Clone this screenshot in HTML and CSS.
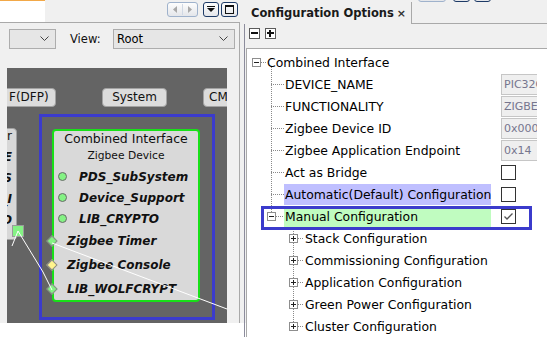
FILE: index.html
```html
<!DOCTYPE html>
<html lang="en">
<head>
    <meta charset="UTF-8">
    <title>Configuration Options</title>
    <link rel="stylesheet" href="styles.css">
</head>
<body>
<div class="app">
    <div class="left">
        <div class="left-head">
            <div class="doc-tab"></div>
            <div class="win-btns">
                <span class="wb wb-nav">
                    <svg width="29" height="13" viewBox="0 0 29 13"><path d="M9 3 L5 6.5 L9 10 Z" fill="#a8a8a8"/><line x1="14.5" y1="1" x2="14.5" y2="12" stroke="#d0d8e4"/><path d="M20 3 L24 6.5 L20 10 Z" fill="#a8a8a8"/></svg>
                </span>
                <span class="wb wb-menu">
                    <svg width="14" height="13" viewBox="0 0 14 13"><path d="M3 5 L11 5 L7 9 Z" fill="#111"/><line x1="3" y1="3.5" x2="11" y2="3.5" stroke="#111"/></svg>
                </span>
                <span class="wb wb-max">
                    <svg width="15" height="13" viewBox="0 0 15 13"><rect x="3.5" y="2.5" width="8" height="8" fill="none" stroke="#111"/><line x1="3.5" y1="3.5" x2="11.5" y2="3.5" stroke="#111"/></svg>
                </span>
            </div>
        </div>
        <div class="left-body">
            <div class="combo-row">
                <div class="combo combo-a">
                    <span></span>
                    <svg class="chev" width="9" height="6" viewBox="0 0 9 6"><polyline points="0.5,0.5 4.5,4.5 8.5,0.5" fill="none" stroke="#444"/></svg>
                </div>
                <span class="view-label">View:</span>
                <div class="combo combo-b">
                    <span>Root</span>
                    <svg class="chev" width="9" height="6" viewBox="0 0 9 6"><polyline points="0.5,0.5 4.5,4.5 8.5,0.5" fill="none" stroke="#444"/></svg>
                </div>
            </div>
            <div class="canvas">
                <div class="blk blk-dfp">F(DFP)</div>
                <div class="blk blk-sys">System</div>
                <div class="blk blk-cm">CMSIS</div>

                <div class="side-node">
                    <div class="side-title">Core Timer</div>
                    <div class="side-item">SYS_TIME</div>
                    <div class="side-item">RTOS_SDS</div>
                    <div class="side-item">HAL_I</div>
                    <div class="side-item">LIB_CRYPTO</div>
                </div>
                <div class="pin"></div>

                <div class="frame"></div>
                <div class="node">
                    <div class="node-title">Combined Interface</div>
                    <div class="node-sub">Zigbee Device</div>
                    <div class="dep"><i class="dot"></i>PDS_SubSystem</div>
                    <div class="dep"><i class="dot"></i>Device_Support</div>
                    <div class="dep"><i class="dot"></i>LIB_CRYPTO</div>
                    <div class="cap"><i class="gem"></i>Zigbee Timer</div>
                    <div class="cap"><i class="gem gem-y"></i>Zigbee Console</div>
                    <div class="cap"><i class="gem"></i>LIB_WOLFCRYPT</div>
                </div>

                <svg class="wires" width="220" height="255" viewBox="0 0 220 255">
                    <polyline points="45,175 220,241" fill="none" stroke="#fff"/>
                    <polyline points="11,163 36,204 45,222" fill="none" stroke="#fff"/>
                    <polyline points="11,163 5,178" fill="none" stroke="#fff"/>
                </svg>
            </div>
        </div>
    </div>

    <div class="gap"></div>

    <div class="right">
        <div class="tab-strip">
            <div class="tab">
                <span class="tab-title">Configuration Options</span>
                <span class="tab-close">&times;</span>
            </div>
            <div class="tab-fill">
                <div class="win-btns win-btns-top">
                    <span class="wb wb-nav"></span>
                    <span class="wb wb-menu"></span>
                    <span class="wb wb-max"></span>
                </div>
            </div>
        </div>
        <div class="rbody">
            <div class="toolbar">
                <span class="tool tool-minus"></span>
                <span class="tool tool-plus"></span>
            </div>
            <div class="tree">
                <div class="row root">
                    <span class="exp open"></span><span class="twig twig-root"></span>
                    <span class="lbl">Combined Interface</span>
                </div>
                <div class="kids kids1">
                    <div class="row">
                        <span class="twig"></span><span class="lbl">DEVICE_NAME</span>
                        <span class="val">PIC32CX1012MTG128</span>
                    </div>
                    <div class="row">
                        <span class="twig"></span><span class="lbl">FUNCTIONALITY</span>
                        <span class="val">ZIGBEE_DEVICE</span>
                    </div>
                    <div class="row">
                        <span class="twig"></span><span class="lbl">Zigbee Device ID</span>
                        <span class="val">0x0000</span>
                    </div>
                    <div class="row">
                        <span class="twig"></span><span class="lbl">Zigbee Application Endpoint</span>
                        <span class="val">0x14</span>
                    </div>
                    <div class="row">
                        <span class="twig"></span><span class="lbl">Act as Bridge</span>
                        <span class="chk"></span>
                    </div>
                    <div class="row">
                        <span class="twig"></span><span class="lbl lbl-blue">Automatic(Default) Configuration</span>
                        <span class="chk"></span>
                    </div>
                    <div class="row row-manual">
                        <span class="exp open"></span><span class="twig twig-short"></span>
                        <span class="lbl lbl-green">Manual Configuration</span>
                        <span class="chk">
                            <svg width="13" height="13" viewBox="0 0 13 13"><polyline points="2.5,6.5 5,9 10.5,3.5" fill="none" stroke="#555" stroke-width="1.3"/></svg>
                        </span>
                    </div>
                </div>
                <div class="kids kids2">
                    <div class="row"><span class="exp"></span><span class="twig twig-sub"></span><span class="lbl">Stack Configuration</span></div>
                    <div class="row"><span class="exp"></span><span class="twig twig-sub"></span><span class="lbl">Commissioning Configuration</span></div>
                    <div class="row"><span class="exp"></span><span class="twig twig-sub"></span><span class="lbl">Application Configuration</span></div>
                    <div class="row"><span class="exp"></span><span class="twig twig-sub"></span><span class="lbl">Green Power Configuration</span></div>
                    <div class="row"><span class="exp"></span><span class="twig twig-sub"></span><span class="lbl">Cluster Configuration</span></div>
                </div>
                <div class="focus-ring"></div>
            </div>
        </div>
    </div>
</div>
</body>
</html>
```

FILE: styles.css
```css
* {
    box-sizing: border-box;
}

body {
    margin: 0;
    width: 547px;
    height: 352px;
    overflow: hidden;
    background: #fff;
    font-family: "DejaVu Sans", sans-serif;
    font-size: 12px;
    color: #000;
}

.app {
    display: flex;
    height: 323px;
    background: #f0f0f0;
}

/* left editor panel */

.left {
    width: 240px;
    flex: none;
}

.left-head {
    height: 22px;
    display: flex;
    justify-content: space-between;
}

.doc-tab {
    width: 45px;
    height: 22px;
    background: #fff;
    border-top: 1px solid #f2a848;
}

.win-btns {
    display: flex;
    padding: 2px 2px 0 0;
}

.wb {
    height: 15px;
    border: 1px solid #1d3a66;
    border-radius: 3px;
    background: linear-gradient(#fdfdfd, #e4e6ea);
    display: flex;
    align-items: center;
    justify-content: center;
}

.wb-nav {
    width: 31px;
    border-color: #9fb2cc;
}

.wb-menu {
    width: 16px;
    margin-left: 5px;
}

.wb-max {
    width: 17px;
    margin-left: 2px;
}

.left-body {
    height: 301px;
    border-top: 1px solid #a9a9a9;
    border-right: 1px solid #a9a9a9;
    padding-top: 6px;
}

.combo-row {
    display: flex;
    align-items: center;
    height: 20px;
    font-size: 11.5px;
}

.combo {
    height: 20px;
    background: #e6e6e6;
    border: 1px solid #adadad;
    display: flex;
    align-items: center;
    justify-content: space-between;
    padding: 0 6px 0 3px;
}

.combo-a {
    width: 47px;
    margin-left: 9px;
}

.view-label {
    width: 43px;
    margin-left: 14px;
    color: #111;
}

.combo-b {
    width: 122px;
}

.canvas {
    position: relative;
    overflow: hidden;
    width: 220px;
    height: 255px;
    margin: 19px 0 0 7px;
    background: #646464;
}

.blk {
    position: absolute;
    top: 20px;
    height: 19px;
    line-height: 17px;
    background: #dcdcdc;
    border: 1px solid #a2a2a2;
    border-radius: 4px;
    font-size: 12px;
    color: #111;
    white-space: nowrap;
}

.blk-dfp {
    left: -8px;
    width: 57px;
    padding-left: 9px;
}

.blk-sys {
    left: 95px;
    width: 65px;
    text-align: center;
}

.blk-cm {
    left: 196px;
    width: 60px;
    padding-left: 5px;
}

.side-node {
    position: absolute;
    left: -90px;
    top: 60px;
    width: 100px;
    height: 112px;
    background: #d8d8d8;
    border: 1px solid #a2a2a2;
    border-radius: 4px;
    padding-right: 4px;
    text-align: right;
    color: #111;
    white-space: nowrap;
}

.side-title {
    line-height: 14px;
    font-size: 12px;
    margin-bottom: 4px;
}

.side-item {
    line-height: 21px;
    font-weight: bold;
    font-style: italic;
}

.pin {
    position: absolute;
    left: 5px;
    top: 157px;
    width: 12px;
    height: 12px;
    background: #84f284;
    border: 1px solid #9a9a9a;
}

.frame {
    position: absolute;
    left: 32px;
    top: 46px;
    width: 176px;
    height: 206px;
    border: 3px solid #3b3bcc;
}

.node {
    position: absolute;
    left: 45px;
    top: 61px;
    width: 148px;
    height: 173px;
    background: #d9d9d9;
    border: 2px solid #18e018;
    border-radius: 4px;
    color: #111;
}

.node-title {
    line-height: 16px;
    font-size: 12.5px;
    text-align: center;
}

.node-sub {
    margin-top: 2px;
    line-height: 14px;
    font-size: 10.7px;
    text-align: center;
    margin-bottom: 3px;
}

.dep,
.cap {
    display: flex;
    align-items: center;
    height: 21px;
    font-size: 12px;
    font-weight: bold;
    font-style: italic;
    white-space: nowrap;
}

.cap {
    height: 24px;
}

.dot {
    width: 9px;
    height: 9px;
    margin: 0 12px 0 4px;
    border-radius: 50%;
    background: #84f284;
    border: 1px solid #6a6a6a;
}

.gem {
    width: 8px;
    height: 8px;
    margin: 0 11px 0 -6px;
    transform: rotate(45deg);
    background: #84f284;
    border: 1px solid #8a8a8a;
}

.gem-y {
    background: #fff48c;
}

.wires {
    position: absolute;
    left: 0;
    top: 0;
}

.gap {
    width: 4px;
    flex: none;
}

/* right configuration panel */

.right {
    flex: 1;
    display: flex;
    flex-direction: column;
    min-width: 0;
}

.tab-strip {
    height: 24px;
    display: flex;
    flex: none;
}

.tab {
    width: 168px;
    height: 22px;
    margin-top: 2px;
    padding: 0 5px 0 7px;
    display: flex;
    align-items: center;
    justify-content: space-between;
    border-right: 1px solid #a9a9a9;
}

.tab-title {
    font-weight: bold;
    font-size: 11.5px;
    color: #1a1a1a;
}

.tab-close {
    font-size: 11px;
    font-weight: bold;
    color: #333;
}

.tab-fill {
    flex: 1;
    border-bottom: 1px solid #a9a9a9;
    overflow: hidden;
}

.win-btns-top {
    margin: -13px 0 0 6px;
    padding: 0;
}

.win-btns-top .wb-nav {
    width: 28px;
}

.win-btns-top .wb-menu {
    margin-left: 7px;
    width: 17px;
}

.win-btns-top .wb-max {
    margin-left: 4px;
}

.rbody {
    flex: 1;
    display: flex;
    flex-direction: column;
    border-left: 1px solid #8c8c9c;
}

.toolbar {
    height: 24px;
    flex: none;
    display: flex;
    gap: 5px;
    padding: 4px 0 0 4px;
}

.tool {
    position: relative;
    width: 11px;
    height: 11px;
    border: 1px solid #5a5a5a;
    background: #fff;
}

.tool::before,
.tool-plus::after {
    content: "";
    position: absolute;
    background: #111;
}

.tool::before {
    left: 1px;
    top: 3px;
    width: 7px;
    height: 2px;
}

.tool-plus::after {
    left: 3px;
    top: 1px;
    width: 2px;
    height: 7px;
}

.tree {
    position: relative;
    flex: 1;
    margin-left: 1px;
    padding-top: 2px;
    background: #fff;
    border-top: 1px solid #a9a9a9;
    border-left: 1px solid #a9a9a9;
    font-size: 12.4px;
    white-space: nowrap;
}

.row {
    display: flex;
    align-items: center;
    height: 22px;
}

.root {
    padding-left: 5px;
}

.kids {
    position: relative;
}

.kids::before {
    content: "";
    position: absolute;
    width: 1px;
    background: repeating-linear-gradient(to bottom, #8a8a8a 0 1px, transparent 1px 2px);
}

.kids1::before {
    left: 24px;
    top: -6px;
    height: calc(100% - 5px);
}

.kids2::before {
    left: 46px;
    top: 0;
    height: calc(100% - 11px);
}

.kids1 .row {
    padding-left: 24px;
}

.kids1 .row-manual {
    padding-left: 20px;
}

.kids2 .row {
    padding-left: 42px;
}

.twig {
    width: 13px;
    height: 1px;
    flex: none;
    background: repeating-linear-gradient(to right, #8a8a8a 0 1px, transparent 1px 2px);
}

.twig-root {
    width: 5px;
}

.twig-short {
    width: 8px;
}

.twig-sub {
    width: 6px;
}

.exp {
    position: relative;
    z-index: 1;
    width: 9px;
    height: 9px;
    flex: none;
    border: 1px solid #8e8e8e;
    background: #fff;
}

.exp::before,
.exp::after {
    content: "";
    position: absolute;
    background: #222;
}

.exp::before {
    left: 1px;
    top: 3px;
    width: 5px;
    height: 1px;
}

.exp::after {
    left: 3px;
    top: 1px;
    width: 1px;
    height: 5px;
}

.exp.open::after {
    display: none;
}

.lbl {
    padding-left: 1px;
}

.kids1 .lbl {
    width: 207px;
    flex: none;
    height: 21px;
    line-height: 21px;
}

.lbl-blue {
    background: #bfbfff;
}

.lbl-green {
    background: #c0fcc0;
}

.val {
    width: 36px;
    height: 21px;
    margin-left: 10px;
    flex: none;
    padding-left: 2px;
    line-height: 19px;
    font-size: 11px;
    color: #76768e;
    background: #efefef;
    border: 1px solid #c6c6c6;
    border-right: none;
    overflow: hidden;
}

.chk {
    width: 15px;
    height: 15px;
    margin-left: 10px;
    flex: none;
    border: 1px solid #333;
    background: #fff;
    display: flex;
    align-items: center;
    justify-content: center;
}

.focus-ring {
    position: absolute;
    left: 14px;
    top: 157px;
    width: 271px;
    height: 24px;
    border: 3px solid #3b3bcc;
}
```
